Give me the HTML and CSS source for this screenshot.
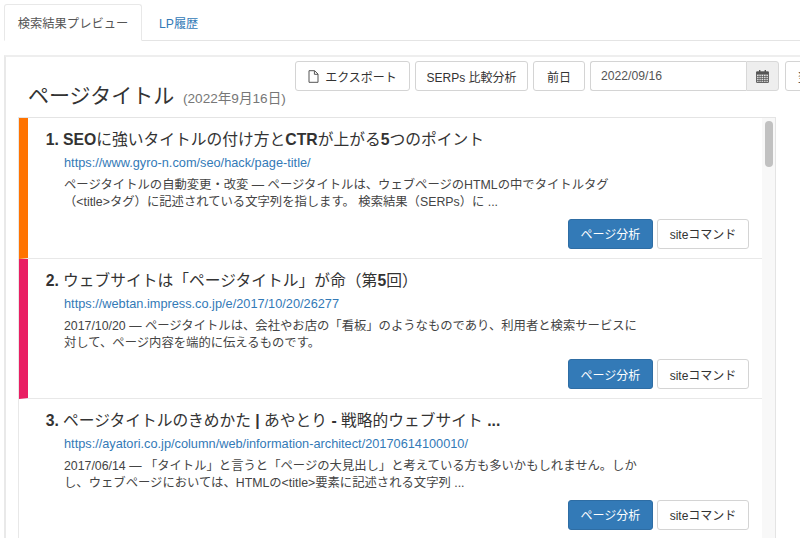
FILE: index.html
```html
<!DOCTYPE html>
<html lang="ja">
<head>
<meta charset="utf-8">
<title>検索結果プレビュー</title>
<link rel="stylesheet" href="styles.css">
</head>
<body>
<div class="page">
  <nav class="tabs">
    <a class="tab tab-active">検索結果プレビュー</a>
    <a class="tab">LP履歴</a>
  </nav>
  <section class="panel">
    <header class="head">
      <h1 class="title">ページタイトル <small class="date">(2022年9月16日)</small></h1>
      <div class="toolbar">
        <button class="btn btn-export"><svg class="file-icon" width="11" height="13" viewBox="0 0 11 13"><path d="M1 .7h5.6L10 4v8.3H1zM6.4.9v3.4H10" fill="none" stroke="#555" stroke-width="1"/></svg>エクスポート</button>
        <button class="btn btn-serps">SERPs 比較分析</button>
        <button class="btn btn-prev">前日</button>
        <div class="datebox">
          <span class="date-input">2022/09/16</span>
          <span class="date-addon"><svg width="13" height="13" viewBox="0 0 13 13"><path d="M3 0h1.4v2H3zM8.6 0H10v2H8.6z" fill="#555"/><path d="M.6 1.8h11.8v10.6H.6z" fill="none" stroke="#555" stroke-width="1"/><path d="M.6 2h11.8v2.6H.6z" fill="#555"/><path d="M1 6.6h11M1 8.6h11M1 10.6h11M3 4.5v7.7M5.2 4.5v7.7M7.6 4.5v7.7M10 4.5v7.7" stroke="#555" stroke-width=".8" fill="none"/></svg></span>
        </div>
        <button class="btn btn-next">翌日</button>
      </div>
    </header>
    <div class="results">
      <div class="list">
        <article class="item item-orange">
          <h2 class="item-title"><span class="b num">1.</span><span class="b">SEO</span>に強いタイトルの付け方と<span class="b">CTR</span>が上がる<span class="b">5</span>つのポイント</h2>
          <a class="url">https://www.gyro-n.com/seo/hack/page-title/</a>
          <p class="snippet">ページタイトルの自動変更・改変 — ページタイトルは、ウェブページのHTMLの中でタイトルタグ<br>（&lt;title&gt;タグ）に記述されている文字列を指します。 検索結果（SERPs）に ...</p>
          <div class="actions"><button class="btn btn-primary">ページ分析</button><button class="btn btn-site">siteコマンド</button></div>
        </article>
        <article class="item item-pink">
          <h2 class="item-title"><span class="b num">2.</span>ウェブサイトは「ページタイトル」が命（第<span class="b">5</span>回）</h2>
          <a class="url">https://webtan.impress.co.jp/e/2017/10/20/26277</a>
          <p class="snippet">2017/10/20 — ページタイトルは、会社やお店の「看板」のようなものであり、利用者と検索サービスに<br>対して、ページ内容を端的に伝えるものです。</p>
          <div class="actions"><button class="btn btn-primary">ページ分析</button><button class="btn btn-site">siteコマンド</button></div>
        </article>
        <article class="item">
          <h2 class="item-title"><span class="b num">3.</span>ページタイトルのきめかた <span class="b">|</span> あやとり <span class="b">-</span> 戦略的ウェブサイト <span class="b">...</span></h2>
          <a class="url">https://ayatori.co.jp/column/web/information-architect/20170614100010/</a>
          <p class="snippet">2017/06/14 — 「タイトル」と言うと「ページの大見出し」と考えている方も多いかもしれません。しか<br>し、ウェブページにおいては、HTMLの&lt;title&gt;要素に記述される文字列 ...</p>
          <div class="actions"><button class="btn btn-primary">ページ分析</button><button class="btn btn-site">siteコマンド</button></div>
        </article>
      </div>
      <div class="scrollbar"><span class="thumb"></span></div>
    </div>
  </section>
</div>
</body>
</html>
```
FILE: styles.css
```css
* { box-sizing: border-box; }
html, body { margin: 0; height: 100%; overflow: hidden; background: #fff; }
body {
  font-family: "Liberation Sans", "Noto Sans CJK JP", sans-serif;
  font-size: 12px;
  color: #333;
}
.page { width: 800px; height: 538px; overflow: hidden; padding-top: 4px; }
.tabs {
  display: flex;
  height: 37px;
  margin-left: 4px;
  border-bottom: 1px solid #e4e4e4;
}
.tab {
  height: 37px;
  padding: 0 14px;
  display: flex;
  align-items: center;
  color: #337ab7;
  border: 1px solid transparent;
  font-size: 12.2px;
}
.tab-active {
  width: 138px;
  color: #555;
  background: #fff;
  border-color: #e8e8e8;
  border-bottom-color: #fff;
  border-radius: 3px 3px 0 0;
  justify-content: center;
  padding: 0;
  font-size: 12.3px;
  margin-right: 2px;
}
.panel {
  margin: 14px 0 0 4px;
  width: 830px;
  height: 500px;
  border-left: 2px solid #e9e9e9;
  border-top: 2px solid #eeeeee;
}
.head {
  display: flex;
  justify-content: space-between;
  height: 60px;
  padding-left: 22px;
}
.title {
  margin: 24px 0 0;
  font-size: 21px;
  line-height: 30px;
  font-weight: 400;
  color: #333;
  white-space: nowrap;
}
.date { font-size: 13.6px; color: #777; margin-left: 3px; }
.toolbar {
  display: flex;
  gap: 5px;
  margin: 4px 0 0;
  height: 30px;
  width: 539px;
  flex: none;
}
.btn {
  font: inherit;
  font-size: 12px;
  color: #333;
  background: #fff;
  border: 1px solid #d4d4d4;
  border-radius: 3px;
  height: 30px;
  padding: 0;
  white-space: nowrap;
  display: inline-flex;
  align-items: center;
  justify-content: center;
  flex: none;
}
.btn-export { width: 115px; gap: 6px; }
.btn-serps { width: 113px; }
.btn-prev { width: 52px; }
.btn-next { width: 50px; margin-left: 1px; }
.datebox { display: flex; width: 189px; flex: none; }
.date-input {
  width: 156px;
  height: 30px;
  border: 1px solid #d4d4d4;
  border-right: 0;
  border-radius: 3px 0 0 3px;
  padding: 0 10px;
  line-height: 28px;
  color: #555;
  font-size: 12.2px;
}
.date-addon {
  width: 33px;
  height: 30px;
  background: #eee;
  border: 1px solid #d8d8d8;
  border-radius: 0 3px 3px 0;
  display: flex;
  align-items: center;
  justify-content: center;
}
.results {
  display: flex;
  margin-left: 12px;
  width: 758px;
  height: 430px;
  border-top: 1px solid #e4e4e4;
  border-left: 1px solid #e8e8e8;
  border-right: 1px solid #e4e4e4;
}
.list { width: 743px; flex: none; }
.item {
  height: 140.5px;
  padding: 11px 12px 0 36px;
  border-left: 9px solid transparent;
  border-bottom: 1px solid #e8e8e8;
  position: relative;
}
.item-orange { border-left-color: #ff7300; }
.item-pink { border-left-color: #e91e63; }
.item-title {
  margin: 0 0 0 -1px;
  font-size: 15.75px;
  line-height: 22px;
  font-weight: 400;
  color: #333;
  position: relative;
  white-space: nowrap;
}
.b { font-weight: 700; }
.num { position: absolute; right: 100%; margin-right: 4px; }
.url {
  display: block;
  margin-top: 3px;
  color: #337ab7;
  font-size: 12.75px;
  line-height: 17px;
}
.snippet {
  margin: 6px 0 0;
  font-size: 12.33px;
  line-height: 17px;
  color: #444;
  white-space: nowrap;
}
.actions {
  position: absolute;
  right: 13px;
  bottom: 9px;
  display: flex;
  gap: 4px;
}
.btn-primary {
  width: 85px;
  background: #337ab7;
  border-color: #2e6da4;
  color: #fff;
}
.btn-site { width: 92px; }
.scrollbar {
  width: 13px;
  background: #f8f8f8;
  padding: 3px 2px 0 3px;
  flex: none;
}
.thumb {
  display: block;
  width: 8px;
  height: 46px;
  background: #c1c1c1;
  border-radius: 4px;
}
```
